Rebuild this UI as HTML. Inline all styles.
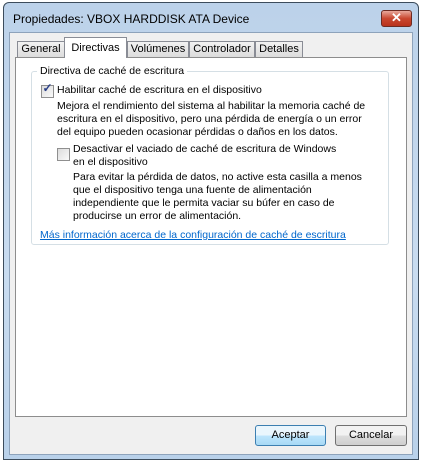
<html><head><style>
body{margin:0;width:421px;height:464px;overflow:hidden;background:#fff;font-family:"Liberation Sans",sans-serif;font-size:10.5px;color:#000}
.a{position:absolute;white-space:nowrap;line-height:13px}
.frame{position:absolute;left:3px;top:2px;width:416px;height:458px;border:1px solid #3c4c5c;border-radius:6px 6px 0 0;background:linear-gradient(#bcd2ea,#c9dcf0 60%,#b9d1ea);box-sizing:border-box}
.client{position:absolute;left:9px;top:32px;width:404px;height:423px;background:#f0f0f0;border:1px solid #8ea3bb;box-sizing:border-box}
.panel{position:absolute;left:15px;top:57px;width:392px;height:360px;background:#fff;border:1px solid #8d8d8d;box-sizing:border-box}
.tab{position:absolute;top:41px;height:16px;border:1px solid #898c95;border-bottom:none;background:linear-gradient(#f2f2f2,#dcdcdc);box-sizing:border-box;text-align:center;line-height:15px;font-size:11px}
.cb{position:absolute;width:11px;height:11px;border:1px solid #8f8f8f;background:linear-gradient(135deg,#dcdcdc,#fafafa)}
.btn{position:absolute;top:425px;height:21px;border:1px solid #707070;border-radius:3px;background:linear-gradient(#f2f2f2 50%,#dddddd 50%,#cfcfcf);box-sizing:border-box;text-align:center;line-height:19px;font-size:11px}
</style></head><body>
<div class="frame"></div>
<div class="a" style="left:13px;top:11px;font-size:12px;line-height:16px">Propiedades: VBOX HARDDISK ATA Device</div>
<div style="position:absolute;left:381px;top:10px;width:31px;height:17px;border:1px solid #6d2b22;border-radius:3px;background:linear-gradient(#e9a99b,#c9472f 50%,#b8321c);box-sizing:border-box;color:#fff;font-weight:bold;text-align:center;line-height:14px;font-size:13px">✕</div>
<div class="client"></div>
<div class="panel"></div>
<div class="tab" style="left:17px;width:48px">General</div>
<div class="tab" style="left:127px;width:62px">Volúmenes</div>
<div class="tab" style="left:189px;width:66px">Controlador</div>
<div class="tab" style="left:255px;width:48px">Detalles</div>
<div class="tab" style="left:64px;top:37px;height:21px;width:63px;background:#fff;line-height:20px">Directivas</div>
<div style="position:absolute;left:31px;top:71px;width:356px;height:172px;border:1px solid #d5dfe5;border-radius:3px"></div>
<div class="a" style="left:37px;top:65px;background:#fff;padding:0 3px">Directiva de caché de escritura</div>
<div class="cb" style="left:41px;top:85px"></div>
<div class="a" style="left:41px;top:82px;color:#2a3f87;font-size:12px;font-weight:bold;width:13px;text-align:center">✓</div>
<div class="a" style="left:57px;top:84px">Habilitar caché de escritura en el dispositivo</div>
<div class="a" style="left:57px;top:100px">Mejora el rendimiento del sistema al habilitar la memoria caché de<br>escritura en el dispositivo, pero una pérdida de energía o un error<br>del equipo pueden ocasionar pérdidas o daños en los datos.</div>
<div class="cb" style="left:57px;top:148px"></div>
<div class="a" style="left:73px;top:143px">Desactivar el vaciado de caché de escritura de Windows<br>en el dispositivo</div>
<div class="a" style="left:73px;top:171px">Para evitar la pérdida de datos, no active esta casilla a menos<br>que el dispositivo tenga una fuente de alimentación<br>independiente que le permita vaciar su búfer en caso de<br>producirse un error de alimentación.</div>
<div class="a" style="left:40px;top:229px;color:#0066cc;text-decoration:underline">Más información acerca de la configuración de caché de escritura</div>
<div class="btn" style="left:255px;width:71px;border-color:#3c7fb1;background:linear-gradient(#eaf6fd 50%,#bee6fd 50%,#a7d9f5)">Aceptar</div>
<div class="btn" style="left:335px;width:72px">Cancelar</div>
</body></html>
